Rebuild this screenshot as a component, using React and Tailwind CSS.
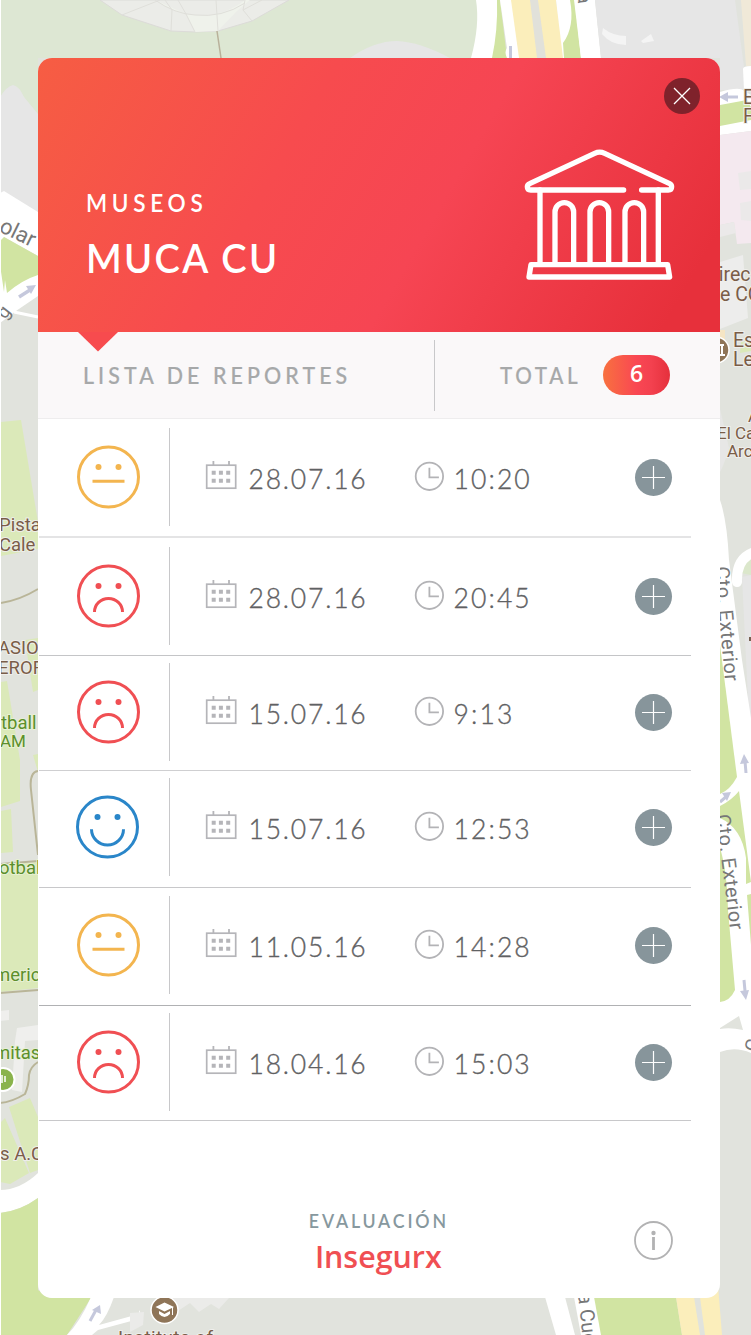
import React from "react";

const reports = [
  { mood: "neutral", date: "28.07.16", time: "10:20", row: "h-[119px] pt-[9px] border-b-2 border-[#e4e4e5]" },
  { mood: "sad", date: "28.07.16", time: "20:45", row: "h-[118px] pt-[9px] border-b border-[#c4c5c7]" },
  { mood: "sad", date: "15.07.16", time: "9:13", row: "h-[115px] pt-[7px] border-b border-[#cfcfd1]" },
  { mood: "happy", date: "15.07.16", time: "12:53", row: "h-[117px] pt-[7px] border-b border-[#c8c8ca]" },
  { mood: "neutral", date: "11.05.16", time: "14:28", row: "h-[118px] pt-[8px] border-b border-[#b0b1b3]" },
  { mood: "sad", date: "18.04.16", time: "15:03", row: "h-[115px] pt-[7px] border-b border-[#c8c8ca]" },
];

const moodColors = { neutral: "#f3b54f", sad: "#f04f53", happy: "#2a86c9" };

function Face({ mood }) {
  const c = moodColors[mood];
  return (
    <svg
      viewBox="-32.5 -32 65 64"
      className={mood === "happy" ? "ml-[36px] -mt-[1px] h-16 w-[65px]" : "ml-[37px] h-16 w-[65px]"}
      fill="none"
      stroke={c}
      strokeWidth="3"
    >
      <circle r="30" />
      <circle cx="-10" cy="-10" r="3" fill={c} stroke="none" />
      <circle cx="10" cy="-10" r="3" fill={c} stroke="none" />
      {mood === "neutral" && <path d="M-16 4.3H16" />}
      {mood === "sad" && <path d="M-14 16A14 13.5 0 0 1 14 16" />}
      {mood === "happy" && <path d="M-16 2.3A16 15.7 0 0 0 16 2.3" />}
    </svg>
  );
}

function Calendar() {
  return (
    <svg viewBox="-0.700 -0.400 32 30" className="h-[30px] w-[32px]" fill="none" stroke="#b5b5b9">
      <rect x="1" y="4.8" width="29" height="23" strokeWidth="1.7" />
      <path d="M7.7 0.5V5M23.3 0.5V5" strokeWidth="1.8" />
      <path d="M6 12.3H10M13.2 12.3H17.2M20.5 12.3H24.5M6 20.3H10M13.2 20.3H17.2M20.5 20.3H24.5" strokeWidth="4" />
    </svg>
  );
}

function Clock() {
  return (
    <svg viewBox="0 0 30 30" className="size-[30px]" fill="none" stroke="#b3b3b6" strokeWidth="1.8">
      <circle cx="15.4" cy="15.3" r="13.7" />
      <path d="M15.4 6.8V16.3H24.9" />
    </svg>
  );
}

function Museum() {
  return (
    <svg viewBox="370 262 460 404" className="h-[134.7px] w-[153.3px]" fill="none" stroke="#fff" strokeWidth="16" strokeLinecap="round" strokeLinejoin="round">
      <path d="M672 391H393Q383 391 383 381Q383 375 390 372L585 281Q600 274 615 281L810 372Q816 375 816 381Q816 391 806 391H726" />
      <path d="M421 391V612M776 391V612" />
      <path d="M466 612V457A28 28 0 0 1 522 457V612M571 612V457A28 28 0 0 1 627 457V612M676 612V457A28 28 0 0 1 732 457V612" />
      <path d="M394 615H804L810 652H388Z" />
    </svg>
  );
}

function CityMap() {
  return (
    <svg viewBox="0 0 751 1335" className="absolute inset-0 h-[1335px] w-[751px]" fontFamily="Roboto, sans-serif">
      <rect width="751" height="1335" fill="#e1e3dd" />

      {/* north side */}
      <path d="M0 0H480V58H38V120H0Z" fill="#dde7d3" />
      <path d="M100 0L122 15L171 31L195 32L218 31L252 21L289 0Z" fill="#ebece8" stroke="#dcdbd8" />
      <path d="M155 0Q175 14 195 15Q222 18 245 0L250 0L236 12L218 31L195 32L186 14" fill="#eff2eb" />
      <path d="M122 15L160 0M171 31L172 10L165 0M195 32L186 14L178 0M155 0Q175 14 195 15Q222 18 245 3M252 21L243 10L245 0M243 10L262 0M216 0L218 31" fill="none" stroke="#dfdfda" />
      <path d="M217 31L221 58" stroke="#b9b19a" strokeWidth="1.5" />
      <path d="M350 58Q374 41 397 41Q420 42 450 58Z" fill="#e6e6e6" />
      <path d="M476 0H500L505 58H471Q480 25 476 0Z" fill="#fff" />
      <path d="M497 0H500L507 58H492Q498 30 497 0Z" fill="#d1e4a2" />
      <path d="M500 0H512L520 58H507Q504 52 507 48Z" fill="#fff" />
      <path d="M510.500 46V58" stroke="#c5c8dc" strokeWidth="3" />
      <path d="M530 0H539L547 58H536Z" fill="#e1e1da" />
      <path d="M511 0H530L537 58H519Z" fill="#fbeebb" />
      <path d="M538 0H556L564 58H546Z" fill="#fbeebb" />
      <path d="M556 0H576L582 58H563Z" fill="#fff" />
      <path d="M570 0H575L581 58H564L563 43Q575 27 570 0Z" fill="#d1e4a2" />
      <path d="M574 0H595L601 58H581Z" fill="#fff" />
      <path d="M595 0H735L744 67V90H720V58H601Z" fill="#e6e6e6" />
      <path d="M741 0H751V66H746Z" fill="#f0e9d8" />
      <path d="M603 28Q613 36 626 36V45Q611 45 602 34ZM641 41L651 34L654 41L643 43Z" fill="#f4f4f4" />
      <text x="577" y="-6" fontSize="19" fill="#777" transform="rotate(83 577 -6)">a</text>

      {/* west side */}
      <path d="M0 97Q7 86 13 85Q19 86 24 97L38 114V215L0 200Z" fill="#e6e6e6" />
      <path d="M0 193L4 191L38 212V256L4 237L0 245Z" fill="#fff" />
      <path d="M0 241L4 237L38 256V276L0 303Z" fill="#d1e4a2" />
      <path d="M38 275Q22 280 7 293L5 280L4 292L0 265V323L16 311L38 296Z" fill="#fff" />
      <path d="M14 312L38 317" stroke="#fff" strokeWidth="3" />
      <path d="M19 297L30 290" stroke="#c5c8dc" strokeWidth="3.5" />
      <path d="M26 286L36 285L31 294Z" fill="#c5c8dc" />
      <text x="-2" y="231" fontSize="22" fill="#777" transform="rotate(26 -2 231)">olar</text>
      <text x="5" y="320" fontSize="19" fill="#777" transform="rotate(-52 5 320)">g</text>
      <path d="M1 422L21 420L38 522V549L1 556Z" fill="#dbe9b9" />
      <path d="M1 603Q20 600 38 589" stroke="#b9b598" strokeWidth="2" fill="none" />
      <path d="M25 640L38 638V690L33 692Z M1 682L7 681L20 760V801L1 807Z M33 755L38 754V772Z M1 811L11 809L13 852L1 853Z" fill="#dbe9b9" />
      <path d="M0 865L38 862V988L0 992Z" fill="#dbe9b9" />
      <path d="M38 771Q29 772 31 790L38 855M0 864L38 861M0 993L38 990" stroke="#b9b598" strokeWidth="2" fill="none" />
      <path d="M0 1011L9 1010V1020L0 1021ZM17 1028L38 1025V1040L25 1041L22 1092L12 1090L15 1041Z" fill="#efefed" />
      <path d="M0 1103Q12 1102 25 1094Q29 1085 29 1075Q30 1067 38 1062" stroke="#b9b598" strokeWidth="2" fill="none" />
      <path d="M9 1107L30 1098L38 1117V1170L30 1173ZM0 1123L5 1118L29 1173L10 1184L0 1182Z" fill="#dbe9b9" />
      <path d="M0 1190Q20 1190 38 1173V1198Q20 1211 0 1213Z" fill="#fff" />
      <path d="M0 1213Q20 1211 38 1198V1290L50 1298H91L67 1335H0Z" fill="#d1e4a2" />
      <circle cx="3" cy="1079.500" r="11.500" fill="#8ab34c" stroke="#fff" strokeWidth="2" />
      <path d="M2 1075V1083M5 1076V1082" stroke="#fff" strokeWidth="1.5" />
      <g fontSize="18.500" fill="#7a5d48" stroke="#eeeeea" strokeWidth="2" paintOrder="stroke">
        <text x="-1" y="531">Pista</text>
        <text x="-1" y="551">Cale</text>
        <text x="-2" y="654" fontSize="18.500">ASIO</text>
        <text x="-2" y="674" fontSize="18.500">EROF</text>
        <text x="0" y="1160">s A.C</text>
      </g>
      <g fontSize="18.500" fill="#5c8f2c" stroke="#e7f0d3" strokeWidth="2" paintOrder="stroke">
        <text x="1" y="729">tball</text>
        <text x="0" y="747" fontSize="17">AM</text>
        <text x="-1" y="874">otball</text>
        <text x="-6" y="981">meric</text>
        <text x="-6" y="1059">mitas</text>
      </g>

      {/* east side */}
      <path d="M743 69Q743 66 751 66V90H744Z" fill="#fff" />
      <path d="M720 92Q740 86 744 91L751 95V131L720 135Z" fill="#fff" />
      <path d="M720 105L747 100L751 107V120L720 126Z" fill="#d1e4a2" />
      <path d="M720 135L751 131V243L737 244L734 222L720 225Z" fill="#f4e9ef" />
      <path d="M738 173L751 171V189L740 190ZM740 203L751 201V221L741 220ZM720 225L734 222L736 233L720 237Z" fill="#ebe9e9" />
      <path d="M720 262L743 255L748 318L720 329Z" fill="#ededec" />
      <path d="M720 330H725V345H720Z" fill="#f5e5c4" />
      <path d="M741 342L751 340V351L740 353Z" fill="#dbe9b9" />
      <path d="M720 409Q725 430 729 448Q724 465 720 472Z" fill="#e7e7e6" />
      <path d="M726 97H738" stroke="#c5c8dc" strokeWidth="3" />
      <path d="M719 97L728 92V102Z" fill="#c5c8dc" />
      <path d="M742 577L751 575V760Z" fill="#e6e6e6" />
      <path d="M741 573Q742 563 751 558V575Z" fill="#dbe7cb" />
      <path d="M720 500Q727 520 729 560L742 660L751 718V1053Q735 1046 720 1052Z" fill="#fff" />
      <path d="M755 552Q736 558 737 582" stroke="#fff" strokeWidth="10" fill="none" strokeLinecap="round" />
      <path d="M720 645L737 777Q730 790 720 794Z" fill="#d1e4a2" />
      <path d="M720 806Q732 800 739 791L751 882L746 884V858Q742 828 720 818Z" fill="#d1e4a2" />
      <path d="M720 848Q727 870 728 910L735 990Q730 1001 720 1002ZM747 895L751 894V945Z" fill="#d1e4a2" />
      <path d="M720 1028L739 1016L743 1030Q730 1027 720 1029Z" fill="#e1e3dd" />
      <path d="M746 773L745 761M720 802L727 796M744 980L745 991" stroke="#c5c8dc" strokeWidth="3" />
      <path d="M744 754L749 763L740 764ZM722 793L731 792L727 801ZM740 991L749 990L746 1000Z" fill="#c5c8dc" />
      <path d="M749 639H751" stroke="#775f50" strokeWidth="4" />
      <g fontSize="20" fill="#777">
        <text x="715" y="567" textLength="115" transform="rotate(85 715 567)">Cto. Exterior</text>
        <text x="716" y="815" textLength="116" transform="rotate(83 716 815)">Cto. Exterior</text>
        <text x="757" y="1053" transform="rotate(-75 757 1053)" fontSize="19">C</text>
      </g>
      <circle cx="716" cy="350" r="13" fill="#8f7558" stroke="#fff" strokeWidth="1.500" />
      <path d="M720 345H724M722 345V355M719 355H725" stroke="#fff" strokeWidth="2" />
      <g fontSize="19.500" fill="#7a5d48" stroke="#efefec" strokeWidth="2" paintOrder="stroke">
        <text x="743" y="104">E</text>
        <text x="743" y="123">F</text>
        <text x="706" y="281">Direc</text>
        <text x="709" y="301">de CO</text>
        <text x="733" y="347">Es</text>
        <text x="733" y="366">Le</text>
        <text x="748" y="422" fontSize="17">A</text>
        <text x="717" y="439" fontSize="17">El Ca</text>
        <text x="727" y="457" fontSize="17">Arc</text>
      </g>

      {/* south side */}
      <path d="M91 1297H114Q107 1317 99 1325L139 1314V1310L140 1312L135 1320L98 1330L92 1335H67Q80 1322 91 1297Z" fill="#fff" />
      <path d="M90 1321L96 1310" stroke="#c5c8dc" strokeWidth="3" />
      <path d="M100 1305L101 1314L92 1310Z" fill="#c5c8dc" />
      <path d="M168 1298H229L219 1309L211 1304L199 1312L190 1303L178 1311ZM130 1313L144 1312L143 1325L130 1332Z" fill="#ebebe9" />
      <circle cx="164.500" cy="1310" r="13.500" fill="#8f7558" stroke="#fff" strokeWidth="1.500" />
      <path d="M155.500 1307L164.500 1302.500L174 1307L164.500 1311.500ZM159 1311L164.500 1314L170 1311V1314Q164.500 1320 159 1314Z" fill="#fff" />
      <path d="M172.500 1307V1315" stroke="#fff" />
      <text x="118" y="1343.500" fontSize="19" fill="#7a5d48" textLength="95" stroke="#efefec" strokeWidth="2" paintOrder="stroke">Institute of</text>
      <path d="M545 1297H565L575 1335H556ZM574 1297H595L602 1335H581Z" fill="#fff" />
      <path d="M594 1297H676L682 1335H601Z" fill="#d1e4a2" />
      <path d="M676 1297H694L700 1335H682ZM700 1297Q715 1297 718 1285L722 1335H705Z" fill="#fbeebb" />
      <text x="578" y="1294" fontSize="20" fill="#777" transform="rotate(84 578 1294)">a Cue</text>
      <rect width="1" height="1335" fill="#fff" />
    </svg>
  );
}

export default function App() {
  return (
    <div className="relative h-[1335px] w-[751px] overflow-hidden font-['Lato',sans-serif]">
      <CityMap />
      <div className="relative px-[38px] pt-[58px]">
        <main className="flex h-[1240px] w-[682px] flex-col overflow-hidden rounded-[14px] bg-white">
          <header className="flex h-[274px] shrink-0 justify-between bg-[linear-gradient(120deg,#f65d43_0%,#f74b4e_36%,#f64553_58%,#e7303b_93%)] text-white">
            <div className="pt-[129px] pl-[48px]">
              <p className="origin-left scale-x-[0.94] text-2xl leading-8 font-semibold tracking-[5px]">MUSEOS</p>
              <h1 className="mt-[11px] origin-left scale-x-[0.93] text-[41px] leading-[56px] font-semibold tracking-[2.5px] whitespace-nowrap">MUCA CU</h1>
            </div>
            <div className="flex flex-col items-end">
              <button className="mt-[20px] mr-[20px] flex size-[36px] items-center justify-center rounded-full bg-[#7f222b]" aria-label="Cerrar">
                <svg viewBox="0 0 18 18" className="size-[18px]" stroke="#fff" strokeWidth="1.300"><path d="M1 1L17 17M17 1L1 17" /></svg>
              </button>
              <div className="mt-[33px] mr-[43.5px]"><Museum /></div>
            </div>
          </header>

          <section className="relative flex h-[87px] shrink-0 border-b border-[#eeedee] bg-[#faf8f9]">
            <svg viewBox="0 0 40 20" className="absolute top-0 left-[40px] h-[20px] w-[40px]"><path d="M0 0H40L20 19.500Z" fill="#f74b4e" /></svg>
            <h2 className="w-[396px] shrink-0 pt-[27px] pl-[45px] text-[23px] leading-8 font-medium tracking-[4.4px] whitespace-nowrap text-[#a6a8a9]">
              <span className="inline-block origin-left scale-x-[0.93] [-webkit-text-stroke:0.2px_#a6a8a9]">LISTA DE REPORTES</span>
            </h2>
            <div className="mt-2 h-[71px] w-px bg-[#c8c8ca]" />
            <div className="w-[168px] pt-[27px] pl-[65px] text-[23px] leading-8 font-medium tracking-[4px] text-[#a6a8a9]">
              <span className="inline-block origin-left scale-x-[0.9] [-webkit-text-stroke:0.2px_#a6a8a9]">TOTAL</span>
            </div>
            <div className="mt-[23px] flex h-[40px] w-[67px] justify-center rounded-full bg-[linear-gradient(90deg,#f8713f_0%,#f94753_50%,#f3414f_72%,#e5303c_100%)] font-['Open_Sans',sans-serif] text-[23px] leading-[37px] font-semibold text-white">6</div>
          </section>

          <ul className="shrink-0">
            {reports.map((r, i) => (
              <li key={i} className={`ml-px w-[652px] ${r.row}`}>
                <div className="flex h-[98px] items-center">
                  <div className="w-[130px] shrink-0"><Face mood={r.mood} /></div>
                  <div className="h-[98px] w-px shrink-0 bg-[#c8c8ca]" />
                  <div className="flex w-[208px] items-center pl-[35px]">
                    <div className="-mt-[4px]"><Calendar /></div>
                    <span className="mt-[5px] ml-[11.5px] text-[26.5px] font-light tracking-[1.8px] whitespace-nowrap text-[#5f6163] [-webkit-text-stroke:0.35px_#5f6163]">{r.date}</span>
                  </div>
                  <div className="flex w-[257px] items-center pl-[36px]">
                    <div className="-mt-[2px]"><Clock /></div>
                    <span className="mt-[5px] ml-[9.5px] text-[26.5px] font-light tracking-[2.1px] text-[#5f6163] [-webkit-text-stroke:0.35px_#5f6163]">{r.time}</span>
                  </div>
                  <button className="flex size-[37px] shrink-0 items-center justify-center rounded-full bg-[#87959b]" aria-label="Ver">
                    <svg viewBox="0 0 23 23" className="size-[23px]" stroke="#fff" strokeWidth="1.200"><path d="M11.500 0V23M0 11.500H23" /></svg>
                  </button>
                </div>
              </li>
            ))}
          </ul>

          <footer className="grid flex-1 grid-cols-[270px_142px_1fr] pt-[86px]">
            <div className="col-start-2 flex flex-col items-center">
              <p className="scale-x-[0.935] text-[19px] leading-7 font-semibold tracking-[3px] whitespace-nowrap text-[#87989e]">EVALUACIÓN</p>
              <p className="mt-[1px] -ml-[2px] scale-x-[0.98] font-['Open_Sans',sans-serif] text-[31px] leading-10 font-semibold whitespace-nowrap text-[#f04f53]"><span className="font-['Lato',sans-serif] font-semibold">I</span>nsegurx</p>
            </div>
            <button className="mt-[14px] mr-[47px] size-[39px] justify-self-end" aria-label="Información">
              <svg viewBox="0 0 39 39" className="size-[39px]" fill="none" stroke="#b2b2b3" strokeWidth="1.800">
                <circle cx="19.500" cy="19.500" r="18.500" />
                <path d="M19.500 16V29" strokeWidth="2.800" />
                <circle cx="19.500" cy="12" r="2.200" fill="#b2b2b3" stroke="none" />
              </svg>
            </button>
          </footer>
        </main>
      </div>
    </div>
  );
}
